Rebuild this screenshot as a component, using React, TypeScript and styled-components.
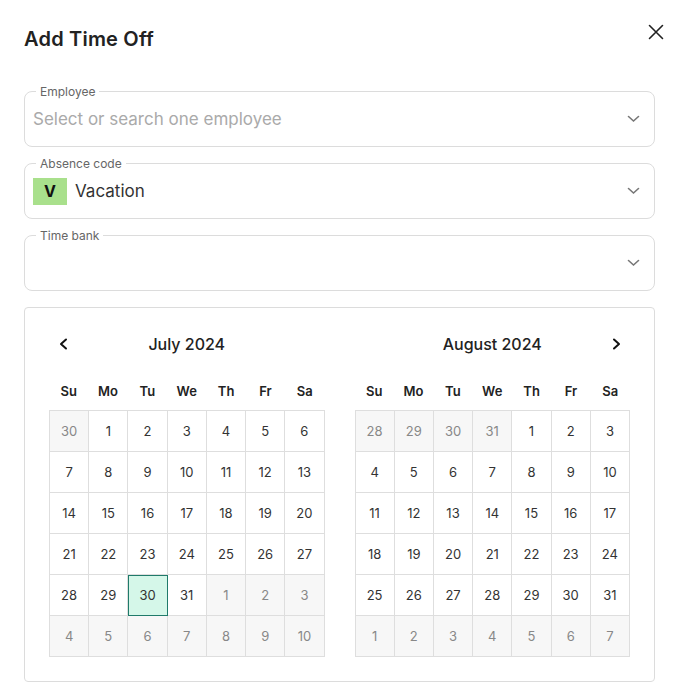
import styled, { createGlobalStyle } from "styled-components";

const GlobalStyle = createGlobalStyle`
  * { box-sizing: border-box; }
  body {
    margin: 0;
    background: #fff;
    font-family: Inter, "Noto Sans", "Liberation Sans", sans-serif;
    color: #222;
  }
`;

type Day = { n: number; other?: boolean; selected?: boolean };

function buildMonth(prevDays: number[], count: number, nextCount: number, selected?: number): Day[] {
  const days: Day[] = prevDays.map((n) => ({ n, other: true }));
  for (let i = 1; i <= count; i++) days.push({ n: i, selected: i === selected });
  for (let i = 1; i <= nextCount; i++) days.push({ n: i, other: true });
  return days;
}

const july = buildMonth([30], 31, 10, 30);
const august = buildMonth([28, 29, 30, 31], 31, 7);
const weekDays = ["Su", "Mo", "Tu", "We", "Th", "Fr", "Sa"];

function Chevron() {
  return (
    <svg width="13" height="8" viewBox="0 0 13 8">
      <polyline points="1.5,1.5 6.5,6 11.5,1.5" fill="none" stroke="#777" strokeWidth="1.6" strokeLinecap="round" />
    </svg>
  );
}

function Arrow({ dir }: { dir: "left" | "right" }) {
  const pts = dir === "left" ? "7,1.5 2,6 7,10.5" : "2,1.5 7,6 2,10.5";
  return (
    <svg width="9" height="12" viewBox="0 0 9 12">
      <polyline points={pts} fill="none" stroke="#111" strokeWidth="2" strokeLinecap="round" strokeLinejoin="round" />
    </svg>
  );
}

function Month({ title, days, arrow }: { title: string; days: Day[]; arrow: "left" | "right" }) {
  return (
    <Panel>
      <MonthHeader>
        {arrow === "left" && (
          <NavButton side="left">
            <Arrow dir="left" />
          </NavButton>
        )}
        <MonthTitle>{title}</MonthTitle>
        {arrow === "right" && (
          <NavButton side="right">
            <Arrow dir="right" />
          </NavButton>
        )}
      </MonthHeader>
      <WeekRow>
        {weekDays.map((d) => (
          <WeekDay key={d}>{d}</WeekDay>
        ))}
      </WeekRow>
      <Grid>
        {days.map((d, i) => (
          <Cell key={i} $other={d.other} $selected={d.selected}>
            {d.n}
          </Cell>
        ))}
      </Grid>
    </Panel>
  );
}

export default function App() {
  return (
    <>
      <GlobalStyle />
      <Modal>
        <Header>
          <Title>Add Time Off</Title>
          <CloseButton aria-label="close">
            <svg width="16" height="16" viewBox="0 0 16 16">
              <path d="M1.5 1.5 L14.5 14.5 M14.5 1.5 L1.5 14.5" stroke="#222" strokeWidth="1.6" strokeLinecap="round" />
            </svg>
          </CloseButton>
        </Header>
        <Form>
          <Field>
            <Label>Employee</Label>
            <Placeholder>Select or search one employee</Placeholder>
            <Chevron />
          </Field>
          <Field>
            <Label>Absence code</Label>
            <Value>
              <Badge>V</Badge>
              Vacation
            </Value>
            <Chevron />
          </Field>
          <Field>
            <Label>Time bank</Label>
            <Value />
            <Chevron />
          </Field>
          <CalendarBox>
            <Month title="July 2024" days={july} arrow="left" />
            <Month title="August 2024" days={august} arrow="right" />
          </CalendarBox>
        </Form>
      </Modal>
    </>
  );
}

const Modal = styled.div`
  width: 675px;
  padding: 24px 20px 0 24px;
`;

const Header = styled.div`
  display: flex;
  justify-content: space-between;
  align-items: flex-start;
  margin-bottom: 37px;
`;

const Title = styled.h1`
  margin: 0;
  font-size: 20px;
  line-height: 30px;
  font-weight: 600;
  letter-spacing: 0.2px;
  color: #222;
`;

const CloseButton = styled.button`
  width: 24px;
  height: 24px;
  margin: -4px -13px 0 0;
  padding: 0;
  border: none;
  background: none;
  display: flex;
  align-items: center;
  justify-content: center;
`;

const Form = styled.div`
  display: flex;
  flex-direction: column;
  gap: 16px;
`;

const Field = styled.div`
  position: relative;
  height: 56px;
  border: 1px solid #dcdcdc;
  border-radius: 8px;
  display: flex;
  align-items: center;
  padding: 0 14px 0 8px;
`;

const Label = styled.span`
  position: absolute;
  top: -8px;
  left: 11px;
  padding: 0 4px;
  background: #fff;
  font-size: 12px;
  line-height: 16px;
  color: #666;
`;

const Placeholder = styled.span`
  flex: 1;
  font-size: 17px;
  color: #aaa;
`;

const Value = styled.div`
  flex: 1;
  display: flex;
  align-items: center;
  gap: 8px;
  font-size: 17px;
  color: #333;
`;

const Badge = styled.span`
  width: 34px;
  height: 27px;
  background: #a9e08c;
  display: flex;
  align-items: center;
  justify-content: center;
  font-weight: 700;
  font-size: 16px;
  color: #111;
`;

const CalendarBox = styled.div`
  border: 1px solid #dcdcdc;
  border-radius: 4px;
  padding: 22px 24px 24px;
  display: flex;
  gap: 30px;
`;

const Panel = styled.div`
  width: 276px;
`;

const MonthHeader = styled.div`
  position: relative;
  height: 28px;
  display: flex;
  align-items: center;
  justify-content: center;
  margin-bottom: 23px;
`;

const MonthTitle = styled.span`
  font-size: 16px;
  font-weight: 500;
  color: #222;
`;

const NavButton = styled.button<{ side: "left" | "right" }>`
  position: absolute;
  top: 0;
  ${(p) => (p.side === "left" ? "left: 0;" : "right: 0;")}
  width: 28px;
  height: 28px;
  padding: 0;
  border: none;
  background: none;
  display: flex;
  align-items: center;
  justify-content: center;
`;

const WeekRow = styled.div`
  display: grid;
  grid-template-columns: repeat(7, 1fr);
  height: 20px;
  margin-bottom: 9px;
`;

const WeekDay = styled.span`
  text-align: center;
  font-size: 13px;
  line-height: 20px;
  font-weight: 600;
  color: #222;
`;

const Grid = styled.div`
  display: grid;
  grid-template-columns: repeat(7, 1fr);
  border-top: 1px solid #dedede;
  border-left: 1px solid #dedede;
`;

const Cell = styled.div<{ $other?: boolean; $selected?: boolean }>`
  height: 41px;
  display: flex;
  align-items: center;
  justify-content: center;
  border-right: 1px solid #dedede;
  border-bottom: 1px solid #dedede;
  font-size: 13px;
  color: ${(p) => (p.$other ? "#888" : "#333")};
  background: ${(p) => (p.$selected ? "#d5f7e9" : p.$other ? "#f7f7f7" : "#fff")};
  ${(p) => p.$selected && "outline: 1px solid #1f7a6a; outline-offset: -1px;"}
`;
